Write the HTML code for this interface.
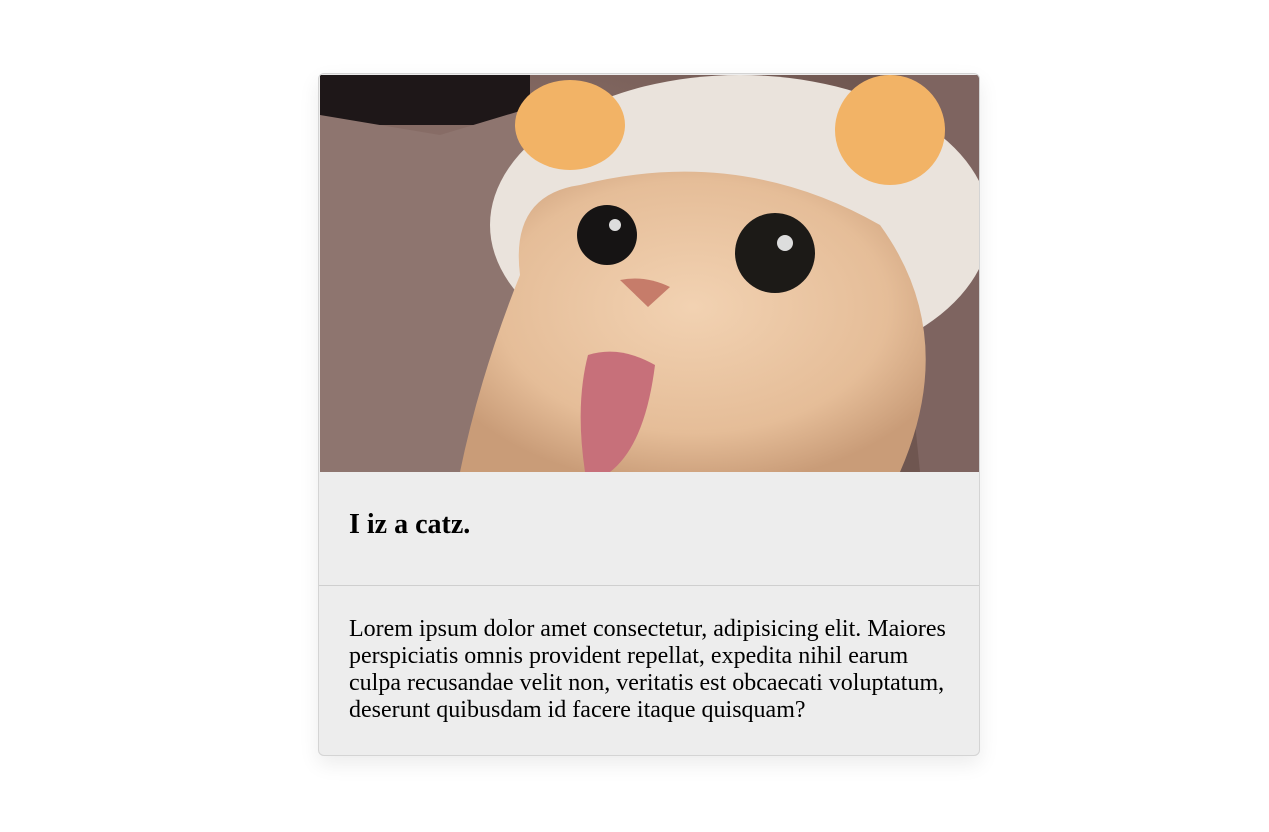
<!DOCTYPE html>
<html><head><style>
html,body{margin:0;padding:0;background:#fff;width:1269px;height:832px;overflow:hidden}
.card{position:absolute;left:318px;top:73px;width:660px;height:681px;border:1px solid #d4d4d4;border-radius:6px;background:#ededed;box-shadow:0 8px 20px rgba(0,0,0,0.08);overflow:hidden;font-family:"Liberation Serif",serif;color:#000}
.img{position:absolute;left:1px;top:1px;width:659px;height:397px}
.title{position:absolute;left:30px;top:435px;font-size:28px;line-height:32px;font-weight:bold;margin:0}
.hr{position:absolute;left:0;top:511px;width:660px;height:1px;background:#cfcfcf}
.body{position:absolute;left:30px;top:542px;width:602px;font-size:24px;line-height:27px;margin:0}
</style></head><body>
<div class="card">
<svg class="img" viewBox="0 0 659 397" preserveAspectRatio="none">
<defs>
<radialGradient id="face" cx="0.5" cy="0.45" r="0.6"><stop offset="0" stop-color="#f2d2b2"/><stop offset="0.7" stop-color="#e5bd98"/><stop offset="1" stop-color="#c99c78"/></radialGradient>
<radialGradient id="bg" cx="0.2" cy="0.5" r="0.8"><stop offset="0" stop-color="#9a7e77"/><stop offset="1" stop-color="#6f5650"/></radialGradient>
</defs>
<rect width="659" height="397" fill="url(#bg)"/>
<rect x="0" y="0" width="210" height="50" fill="#1e1718"/>
<path d="M0 40 L120 60 L220 30 L200 397 L0 397Z" fill="#8e756f"/>
<path d="M560 0 L659 0 L659 397 L600 397Z" fill="#7e6460"/>
<ellipse cx="420" cy="150" rx="250" ry="150" fill="#eae3dc"/>
<ellipse cx="250" cy="50" rx="55" ry="45" fill="#f2b366"/>
<ellipse cx="570" cy="55" rx="55" ry="55" fill="#f2b366"/>
<path d="M200 200 Q190 120 260 110 Q420 70 560 150 Q640 260 580 397 L140 397 Q160 300 200 200Z" fill="url(#face)"/>
<circle cx="287" cy="160" r="30" fill="#161414"/>
<circle cx="455" cy="178" r="40" fill="#1c1a17"/>
<circle cx="295" cy="150" r="6" fill="#ddd"/>
<circle cx="465" cy="168" r="8" fill="#ddd"/>
<path d="M300 205 Q325 200 350 212 L328 232Z" fill="#c67c6a"/>
<path d="M268 280 Q300 270 335 290 Q325 370 290 397 L265 397 Q255 330 268 280Z" fill="#c7707a"/>
</svg>
<h2 class="title">I iz a catz.</h2>
<div class="hr"></div>
<p class="body">Lorem ipsum dolor amet consectetur, adipisicing elit. Maiores perspiciatis omnis provident repellat, expedita nihil earum culpa recusandae velit non, veritatis est obcaecati voluptatum, deserunt quibusdam id facere itaque quisquam?</p>
</div>
</body></html>
